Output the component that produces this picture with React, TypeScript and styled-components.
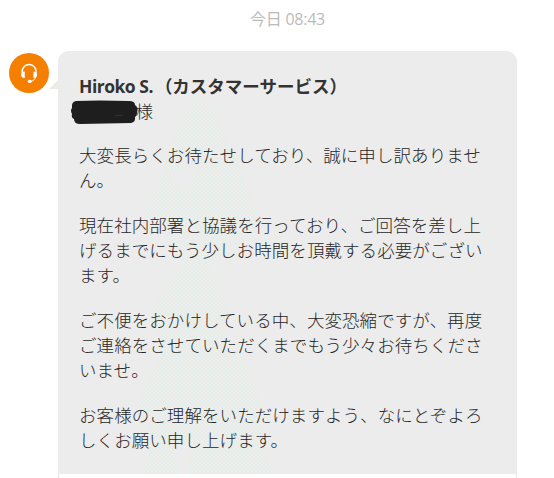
import React from 'react';
import styled, { createGlobalStyle } from 'styled-components';

const GlobalStyle = createGlobalStyle`
  * { box-sizing: border-box; }
  body { margin: 0; background: #fff; overflow: hidden; }
`;

const Chat = styled.main`
  width: 554px;
  height: 478px;
  overflow: hidden;
  color: #262626;
  font: 300 17.5px/25px 'Open Sans', 'Noto Sans CJK JP', sans-serif;
`;

const Timestamp = styled.time`
  display: block;
  height: 51px;
  padding: 7px 0 0 250px;
  color: #bbb;
  font-size: 16px;
  font-weight: 400;
  letter-spacing: -0.25px;
  white-space: nowrap;
`;

const Message = styled.article`
  display: flex;
  align-items: flex-start;
  padding-left: 9px;
`;

const Avatar = styled.div`
  width: 40px;
  height: 40px;
  margin-top: 2px;
  border-radius: 50%;
  background: #f57f00;
`;

const Tail = styled.div`
  width: 9px;
  height: 9px;
  margin-top: 29px;
  background: #ebece7;
  clip-path: polygon(100% 0, 100% 100%, 0 100%);
`;

const Bubble = styled.div`
  width: 459px;
`;

const Body = styled.div`
  position: relative;
  height: 423px;
  padding: 23px 21px 0;
  overflow: hidden;
  border-radius: 11px 11px 0 0;
  background: #ececec;
`;

const Footer = styled.div`
  height: 4px;
  border: solid #e6e6e6;
  border-width: 0 1px;
`;

const Watermark = styled.svg`
  position: absolute;
  inset: 0;
`;

const Content = styled.div`
  position: relative;
`;

const Sender = styled.h1`
  margin: 0;
  color: #333;
  font-size: 17.5px;
  font-weight: 700;
  line-height: 25px;
  white-space: nowrap;
`;

const LatinName = styled.span`
  margin-right: 2px;
  letter-spacing: -0.5px;
`;

const Recipient = styled.div`
  position: relative;
  height: 25px;
  margin-bottom: -1px;
  padding-left: 56.5px;
`;

const Redaction = styled.svg`
  position: absolute;
  left: -9px;
  top: -0.5px;
`;

const Paragraph = styled.p`
  margin: 20px 0 0;
  letter-spacing: 0.07px;
  white-space: nowrap;
`;

const paragraphs = [
  ['大変長らくお待たせしており、誠に申し訳ありませ', 'ん。'],
  ['現在社内部署と協議を行っており、ご回答を差し上', 'げるまでにもう少しお時間を頂戴する必要がござい', 'ます。'],
  ['ご不便をおかけしている中、大変恐縮ですが、再度', 'ご連絡をさせていただくまでもう少々お待ちくださ', 'いませ。'],
  ['お客様のご理解をいただけますよう、なにとぞよろ', 'しくお願い申し上げます。'],
];

export default function App() {
  return (
    <Chat>
      <GlobalStyle />
      <Timestamp>今日 08:43</Timestamp>
      <Message>
        <Avatar>
          <svg width="40" height="40" viewBox="0 0 40 40" fill="none">
            <path d="M13.2 20v-1.5a6.9 7 0 0 1 13.8 0V20" stroke="#fff" strokeWidth="1.5" />
            <path d="M15.8 18.4v6.6c-2.4 0-3.7-1.2-3.7-3.3s1.3-3.3 3.7-3.3ZM24.4 18.4v6.6c2.4 0 3.7-1.2 3.7-3.3s-1.3-3.3-3.7-3.3Z" fill="#fff" />
            <path d="M26.4 24c-.4 2.6-1.7 3.9-5 4.4" stroke="#fff" strokeWidth="1" />
            <ellipse cx="20.7" cy="28.4" rx="2" ry="1.6" fill="#fff" />
          </svg>
        </Avatar>
        <Tail />
        <Bubble>
          <Body>
            <Watermark width="459" height="423" viewBox="0 0 459 423">
              <defs>
                <pattern id="grain" width="4" height="4" patternUnits="userSpaceOnUse">
                  <rect width="4" height="4" fill="#ebece8" />
                  <path d="M0 0h1v1H0zM2 1h1v1H2zM1 2h1v1H1zM3 3h1v1H3z" fill="#e0edef" />
                  <path d="M2 0h1v1H2zM0 2h1v1H0zM1 3h1v1H1zM3 1h1v1H3z" fill="#f6efdf" />
                </pattern>
              </defs>
              <path
                fill="url(#grain)"
                fillRule="evenodd"
                d="M135 44 142 50 150 46 202 166 192 189 160 200 149 209 175 269 168 276 195 329 207 366 203 386 215 423H127L138 390 112 382 120 423H84L94 385 77 356 102 306 94 256 132 202 112 190 85 162 107 116 114 89ZM109 119 125 142 140 117Z"
              />
            </Watermark>
            <Content>
              <Sender><LatinName>Hiroko S.</LatinName>（カスタマーサービス）</Sender>
              <Recipient>
                様
                <Redaction width="70" height="28" viewBox="0 0 70 28">
                  <path d="M6 2 30 1.5l29 .5q6 0 6 4 4 3 2 7 0 4-2 5 1 5-4 6L10 25q-6 0-6-5-3-1-2-5-2-4 0-6-1-6 4-7Z" fill="#1e1e1e" />
                  <path d="M45 16.5h8" stroke="#444" strokeWidth=".5" />
                </Redaction>
              </Recipient>
              {paragraphs.map((lines) => (
                <Paragraph key={lines[0]}>
                  {lines.map((line, index) => (
                    <React.Fragment key={line}>{index > 0 && <br />}{line}</React.Fragment>
                  ))}
                </Paragraph>
              ))}
            </Content>
          </Body>
          <Footer />
        </Bubble>
      </Message>
    </Chat>
  );
}
